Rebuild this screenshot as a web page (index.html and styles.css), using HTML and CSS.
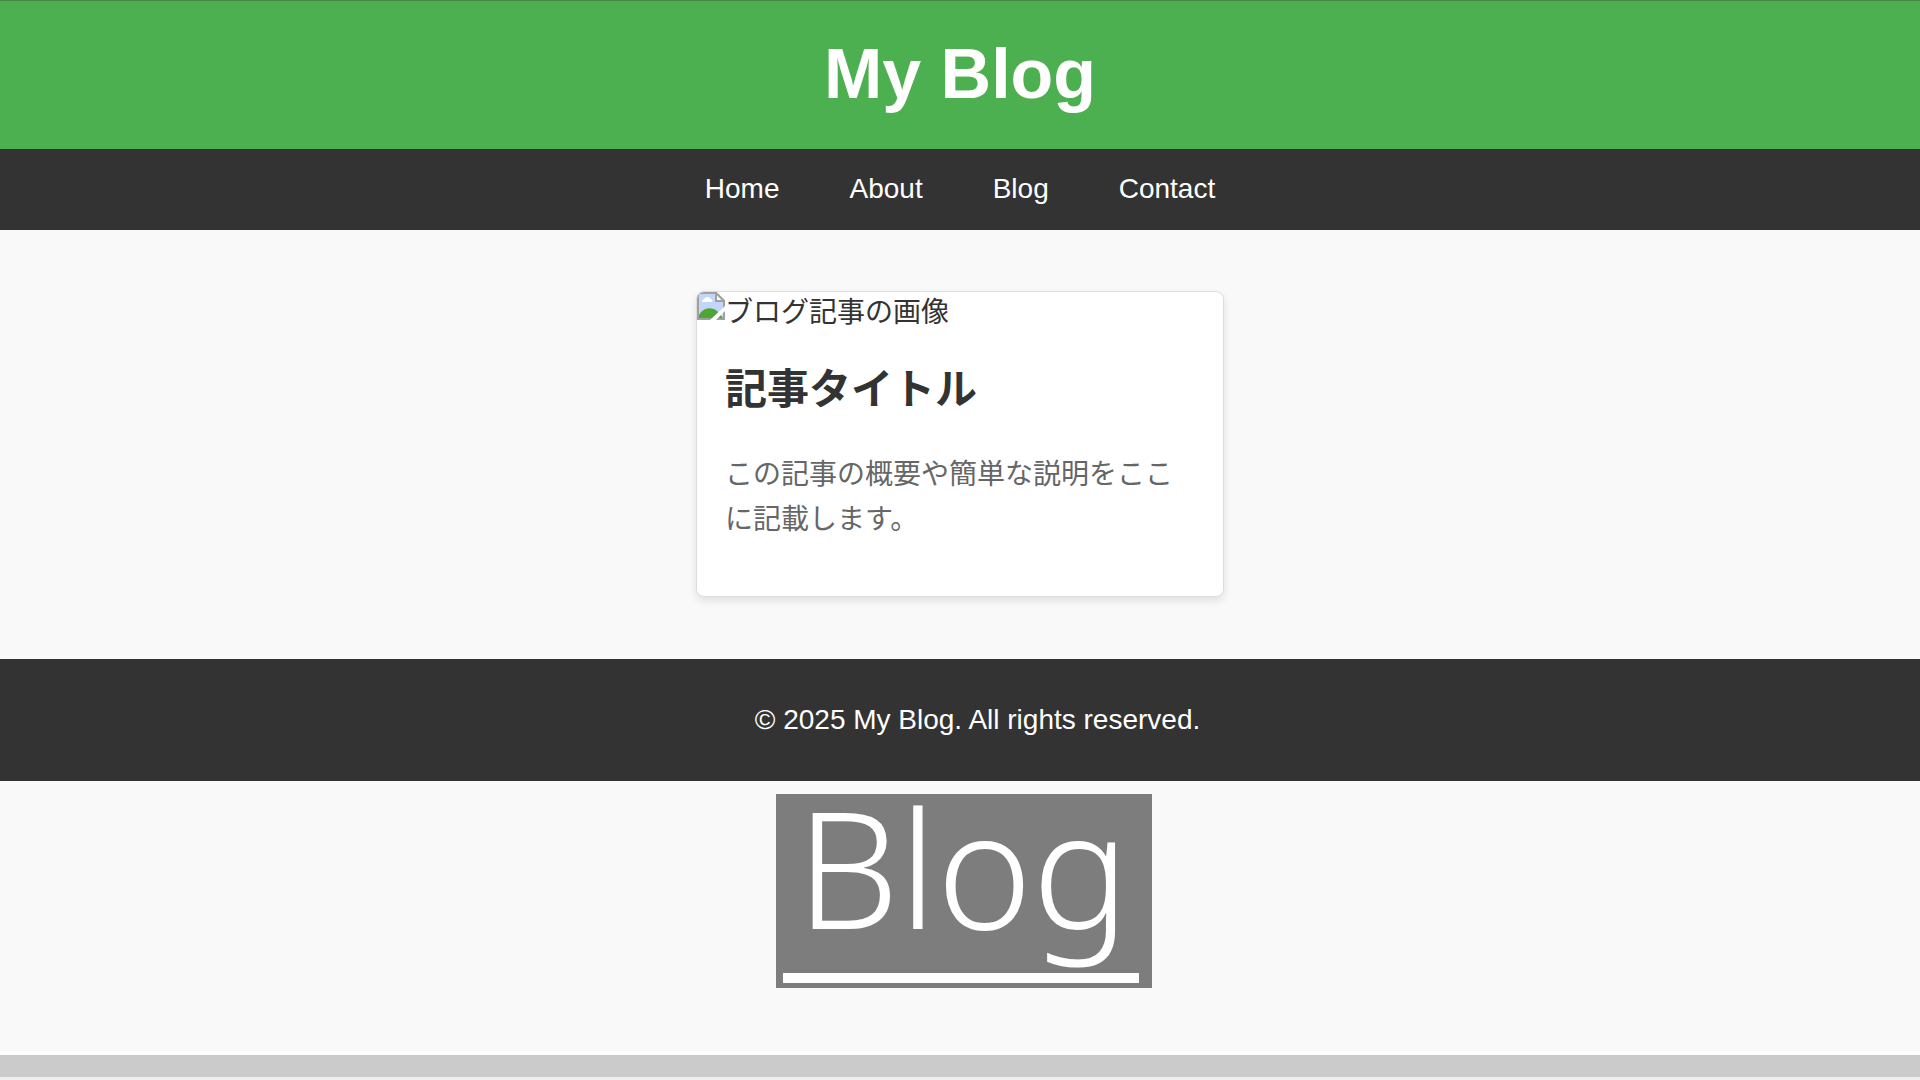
FILE: index.html
```html
<!DOCTYPE html>
<html lang="ja">

<head>
    <meta charset="UTF-8">
    <meta name="viewport" content="width=device-width, initial-scale=1.0">
    <title>My Blog</title>
    <link rel="stylesheet" href="styles.css">
</head>

<body>
    <header>
        <h1>My Blog</h1>
    </header>
    <nav>
        <ul>
            <li><a href="#">Home</a></li>
            <li><a href="#">About</a></li>
            <li><a href="#">Blog</a></li>
            <li><a href="#">Contact</a></li>
        </ul>
    </nav>
    <main>
        <article class="card">
            <div class="card-image">
                <svg class="img-icon" viewBox="0 0 28 28" aria-hidden="true">
                    <path d="M1 1H19L27 9V27H1Z" fill="#c3d5f8" stroke="#a0a0a0" stroke-width="2" />
                    <path d="M5 10a3 3 0 0 1 2-3 4 4 0 0 1 7 0 2 2 0 0 1 1 3z" fill="#fff" />
                    <path d="M2 26V23C7 15 15 15 20 19L26 26Z" fill="#4ea632" />
                    <path d="M19 1V9H27Z" fill="#fff" stroke="#a0a0a0" stroke-width="2" />
                    <path d="M13 28L28 14V19L19 28Z" fill="#fff" />
                </svg>
                <span>ブログ記事の画像</span>
            </div>
            <div class="card-content">
                <h2>記事タイトル</h2>
                <p>この記事の概要や簡単な説明をここに記載します。</p>
            </div>
        </article>
    </main>
    <footer>
        <p>© 2025 My Blog. All rights reserved.</p>
    </footer>
    <div class="banner">
        <span>Blog</span>
    </div>
    <div class="bottom-bar"></div>
</body>

</html>
```
FILE: styles.css
```css
* {
    margin: 0;
    padding: 0;
    box-sizing: border-box;
}

body {
    display: flex;
    flex-direction: column;
    min-height: 100vh;
    font-family: "Liberation Sans", "Noto Sans CJK JP", sans-serif;
    font-size: 28px;
    line-height: 32px;
    color: #333;
    background: #f9f9f9;
}

header {
    padding: 33px 34px 35px;
    text-align: center;
    color: #fff;
    background: #4caf50;
    border-top: 1px solid #47854a;
}

h1 {
    font-size: 70px;
    line-height: 80px;
}

nav {
    padding: 24px 24px 25px;
    background: #333;
}

nav ul {
    display: flex;
    justify-content: center;
    gap: 70px;
    list-style: none;
}

nav a {
    color: #fff;
    text-decoration: none;
}

main {
    display: flex;
    justify-content: center;
    padding: 61px 20px 62px;
}

.card {
    width: 528px;
    background: #fff;
    border: 1px solid #ddd;
    border-radius: 8px;
    box-shadow: 0 4px 8px rgba(0, 0, 0, 0.1);
    overflow: hidden;
}

.card-image {
    display: flex;
    align-items: flex-start;
    line-height: 42px;
}

.img-icon {
    width: 28px;
    height: 28px;
}

.card-content {
    padding: 28px;
}

h2 {
    margin-bottom: 34px;
    font-size: 42px;
    line-height: 56px;
}

.card p {
    margin-bottom: 26px;
    line-height: 45px;
    color: #666;
}

footer {
    padding: 45px 0 45px 35px;
    text-align: center;
    color: #fff;
    background: #333;
}

.banner {
    align-self: center;
    width: 376px;
    margin: 13px 0 0 7px;
    padding: 0 13px 5px 7px;
    background: #7d7d7d;
}

.banner span {
    display: block;
    height: 189px;
    padding-left: 14px;
    border-bottom: 10px solid #fff;
    font-family: "Noto Sans", "Open Sans", sans-serif;
    font-size: 162px;
    font-weight: 300;
    line-height: 144px;
    color: #fff;
}

.bottom-bar {
    height: 29px;
    margin-top: auto;
    background: #cbcbcb;
    border-top: 4px solid #fff;
    border-bottom: 3px solid #eee;
}
```
